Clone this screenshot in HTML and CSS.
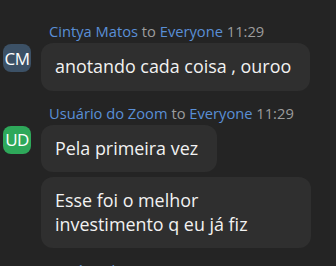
FILE: index.html
```html
<!DOCTYPE html>
<html>
<head>
<meta charset="utf-8">
<link rel="stylesheet" href="styles.css">
</head>
<body>
<div class="chat">
  <div class="group">
    <div class="head"><span class="name">Cintya Matos</span> <span class="muted">to</span> <span class="name">Everyone</span> <span class="muted">11:29</span></div>
    <div class="row">
      <div class="avatar cm">CM</div>
      <div class="bubbles">
        <div class="bubble">anotando cada coisa , ouroo</div>
      </div>
    </div>
  </div>
  <div class="group">
    <div class="head"><span class="name">Usuário do Zoom</span> <span class="muted">to</span> <span class="name">Everyone</span> <span class="muted">11:29</span></div>
    <div class="row">
      <div class="avatar ud">UD</div>
      <div class="bubbles">
        <div class="bubble">Pela primeira vez</div>
        <div class="bubble wide">Esse foi o melhor investimento q eu já fiz</div>
      </div>
    </div>
  </div>
  <div class="group">
    <div class="head"><span class="name">Usuário do Zoom</span> <span class="muted">to</span> <span class="name">Everyone</span> <span class="muted">11:29</span></div>
  </div>
</div>
</body>
</html>
```
FILE: styles.css
```css
html, body {
  margin: 0;
  padding: 0;
  background: #242424;
  overflow: hidden;
}
body {
  font-family: "Open Sans", "Noto Sans", sans-serif;
  color: #f2f2f2;
}
.chat {
  padding-top: 21px;
  display: flex;
  flex-direction: column;
  gap: 12px;
}
.head {
  padding-left: 49px;
  font-size: 14.7px;
  line-height: 20px;
  margin-bottom: 2px;
  white-space: nowrap;
}
.name { color: #5a8fd6; }
.muted { color: #9c9c9c; }
.row {
  display: flex;
  align-items: flex-start;
  padding-left: 3px;
  gap: 10px;
}
.avatar {
  width: 28px;
  height: 28px;
  margin-top: 1px;
  border-radius: 8px;
  flex: none;
  display: flex;
  align-items: center;
  justify-content: center;
  font-size: 17px;
  color: #ffffff;
  letter-spacing: -0.5px;
}
.cm { background: #3c5166; }
.ud { background: #2ea85a; }
.bubbles {
  display: flex;
  flex-direction: column;
  align-items: flex-start;
  gap: 5px;
}
.bubble {
  background: #2f2f2f;
  border-radius: 12px;
  padding: 12px 19px 12px 14px;
  max-width: 270px;
  box-sizing: border-box;
  font-size: 17.9px;
  line-height: 23.5px;
}
.wide { width: 270px; }
```
